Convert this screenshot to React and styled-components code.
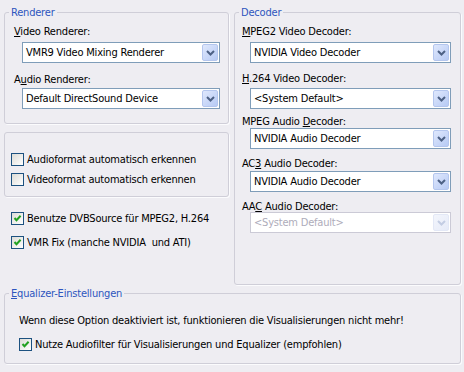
import styled, { createGlobalStyle } from 'styled-components';

const GlobalStyle = createGlobalStyle`
    html, body {
        margin: 0;
        padding: 0;
        background: #eeedf2;
    }
    body {
        font-family: "DejaVu Sans Condensed", "Liberation Sans", Arial, sans-serif;
        font-size: 11px;
        letter-spacing: -0.2px;
        color: #000;
    }
`

// rows of the decoder box: label spacing and combo spacing, read off the dialog
const decoders = [
    { label: ['', 'M', 'PEG2 Video Decoder:'], value: 'NVIDIA Video Decoder', mt: 6, cmt: 4 },
    { label: ['', 'H', '.264 Video Decoder:'], value: '<System Default>', mt: 9, cmt: 3 },
    { label: ['MPEG Audio ', 'D', 'ecoder:'], value: 'NVIDIA Audio Decoder', mt: 6, cmt: 0 },
    { label: ['AC', '3', ' Audio Decoder:'], value: 'NVIDIA Audio Decoder', mt: 8, cmt: 1 },
    { label: ['AA', 'C', ' Audio Decoder:'], value: '<System Default>', mt: 8, cmt: -1, disabled: true },
];

function Chevron({ disabled }) {
    return (
        <svg width="9" height="6" viewBox="0 0 9 6">
            <path
                d="M1 1 L4.5 4.5 L8 1"
                fill="none"
                stroke={disabled ? '#c3cde3' : '#4d6185'}
                strokeWidth="2"
            />
        </svg>
    );
}

function Combo({ value, width, disabled, mt }) {
    return (
        <ComboBox $w={width} $disabled={disabled} $mt={mt}>
            <ComboText $disabled={disabled}>{value}</ComboText>
            <DropButton $disabled={disabled}>
                <Chevron disabled={disabled} />
            </DropButton>
        </ComboBox>
    );
}

function Check({ checked, children, h, gap }) {
    return (
        <CheckRow $h={h}>
            <CheckBox>
                {checked && (
                    <svg width="9" height="9" viewBox="0 0 9 9">
                        <path d="M1.5 4 L3.5 6.2 L7.6 1.8" fill="none" stroke="#21a121" strokeWidth="2" />
                    </svg>
                )}
            </CheckBox>
            <CheckLabel $gap={gap}>{children}</CheckLabel>
        </CheckRow>
    );
}

export default function App() {
    return (
        <>
            <GlobalStyle />
            <Page>
                <TopRow>
                    <LeftColumn>
                        <GroupBox $w={225}>
                            <Legend>Renderer</Legend>
                            <GroupBody $pl={9} $pt={6} $pb={14}>
                                <FieldLabel $mt={0}><u>V</u>ideo Renderer:</FieldLabel>
                                <Combo value="VMR9 Video Mixing Renderer" width={198} mt={4} />
                                <FieldLabel $mt={10}>A<u>u</u>dio Renderer:</FieldLabel>
                                <Combo value="Default DirectSound Device" width={198} mt={2} />
                            </GroupBody>
                        </GroupBox>

                        <PlainGroup>
                            <Check h={20}>Audioformat automatisch erkennen</Check>
                            <Check h={20}>Videoformat automatisch erkennen</Check>
                        </PlainGroup>

                        <LooseChecks>
                            <Check h={24} checked>Benutze DVBSource für MPEG2, H.264</Check>
                            <Check h={24} checked>VMR Fix (manche NVIDIA&nbsp; und ATI)</Check>
                        </LooseChecks>
                    </LeftColumn>

                    <GroupBox $w={227} $h={279}>
                        <Legend>Decoder</Legend>
                        <GroupBody $pl={7} $pt={0} $pb={0}>
                            {decoders.map((d) => (
                                <div key={d.label.join('')}>
                                    <FieldLabel $mt={d.mt}>
                                        {d.label[0]}<u>{d.label[1]}</u>{d.label[2]}
                                    </FieldLabel>
                                    <Combo value={d.value} width={201} mt={d.cmt} disabled={d.disabled} />
                                </div>
                            ))}
                        </GroupBody>
                    </GroupBox>
                </TopRow>

                <EqualizerBox $w={457}>
                    <Legend><u>E</u>qualizer-Einstellungen</Legend>
                    <GroupBody $pl={14} $pt={14} $pb={9}>
                        <Note>Wenn diese Option deaktiviert ist, funktionieren die Visualisierungen nicht mehr!</Note>
                        <EqCheck>
                            <Check h={20} checked gap={3}>Nutze Audiofilter für Visualisierungen und Equalizer (empfohlen)</Check>
                        </EqCheck>
                    </GroupBody>
                </EqualizerBox>
            </Page>
        </>
    );
}

const Page = styled.div`
    width: 464px;
    height: 372px;
    box-sizing: border-box;
    padding: 6px 0 0 4px;
    background: #eeedf2;
    overflow: hidden;
`
const TopRow = styled.div`
    display: flex;
    align-items: flex-start;
    gap: 5px;
`
const LeftColumn = styled.div`
    display: flex;
    flex-direction: column;
    width: 225px;
`
const GroupBox = styled.fieldset`
    box-sizing: border-box;
    width: ${(p) => p.$w}px;
    ${(p) => (p.$h ? `height: ${p.$h}px;` : '')}
    margin: 0;
    padding: 0;
    min-width: 0;
    border: 1px solid #cfced8;
    border-radius: 3px;
    box-shadow: 1px 1px 0 #fbfbfd;
`
const EqualizerBox = styled(GroupBox)`
    margin-top: 2px;
`
const Legend = styled.legend`
    margin-left: 4px;
    padding: 0 2px;
    line-height: 13px;
    font-size: 11px;
    color: #2d55be;
`
const GroupBody = styled.div`
    padding: ${(p) => p.$pt}px 6px ${(p) => p.$pb}px ${(p) => p.$pl}px;
`
const FieldLabel = styled.div`
    margin-top: ${(p) => p.$mt}px;
    line-height: 13px;
    white-space: nowrap;
`
const ComboBox = styled.div`
    display: flex;
    align-items: center;
    box-sizing: border-box;
    width: ${(p) => p.$w}px;
    height: 21px;
    margin: ${(p) => p.$mt}px 0 0 8px;
    border: 1px solid ${(p) => (p.$disabled ? '#cbcad6' : '#7f9db9')};
    background: #fff;
`
const ComboText = styled.span`
    flex: 1;
    padding-left: 3px;
    line-height: 13px;
    white-space: nowrap;
    color: ${(p) => (p.$disabled ? '#aeacba' : '#000')};
`
const DropButton = styled.span`
    display: flex;
    align-items: center;
    justify-content: center;
    box-sizing: border-box;
    width: 16px;
    height: 17px;
    margin-right: 1px;
    border: 1px solid ${(p) => (p.$disabled ? '#e3e8f6' : '#b4c6ee')};
    border-radius: 2px;
    background: ${(p) =>
        p.$disabled
            ? 'linear-gradient(135deg, #f3f5fc, #e6ebf8)'
            : 'linear-gradient(135deg, #dfe8fd, #b7caf4)'};
`
const PlainGroup = styled.div`
    box-sizing: border-box;
    margin-top: 8px;
    height: 65px;
    padding: 16px 6px 0 6px;
    border: 1px solid #cfced8;
    border-radius: 3px;
    box-shadow: 1px 1px 0 #fbfbfd;
`
const LooseChecks = styled.div`
    margin-top: 9px;
    padding-left: 7px;
`
const CheckRow = styled.div`
    display: flex;
    align-items: center;
    height: ${(p) => p.$h}px;
`
const CheckBox = styled.span`
    display: flex;
    align-items: center;
    justify-content: center;
    box-sizing: border-box;
    flex: 0 0 13px;
    width: 13px;
    height: 13px;
    border: 1px solid #1c5180;
    background: linear-gradient(135deg, #dcdcd7, #ffffff);
`
const CheckLabel = styled.span`
    margin-left: ${(p) => (p.$gap !== undefined ? p.$gap : 3)}px;
    line-height: 13px;
    white-space: nowrap;
`
const Note = styled.div`
    line-height: 13px;
    white-space: nowrap;
`
const EqCheck = styled.div`
    margin-top: 7px;
`
